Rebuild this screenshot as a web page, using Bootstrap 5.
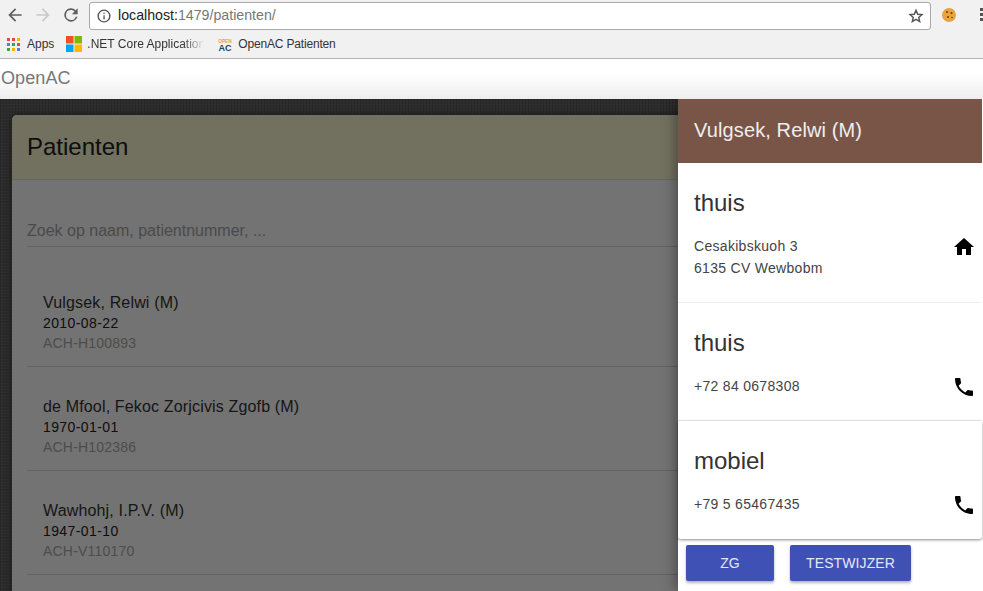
<!doctype html>
<html lang="nl"><head><meta charset="utf-8"><title>OpenAC</title>
<link href="https://cdn.jsdelivr.net/npm/bootstrap@5.3.0/dist/css/bootstrap.min.css" rel="stylesheet">
<style>
html,body{height:591px;overflow:hidden}
body{font-family:"Liberation Sans",Arial,sans-serif;background:#f1f1f1;position:relative;color:#212121}
.tool-row{height:30px;padding-left:5px}
.nav-glyph{width:20px;height:20px;flex:none}
.nav-glyph+.nav-glyph{margin-left:8px}
.url-box{width:843px;height:28px;margin-left:8px;background:#fff;border:1px solid #a9a9a9;border-radius:3px;font-size:14.2px;padding:0 6px 0 7px;margin-top:2px}
.url-box .host{color:#222}.url-box .rest{color:#777}
.mark-row{height:29px;font-size:12px;color:#333;border-bottom:1px solid #b5b5b5;padding-left:7px}
.bm{white-space:nowrap}
.app-bar{height:40px;background:linear-gradient(#fff 35%,#eee);padding-left:1px;font-size:18px;letter-spacing:.1px;color:#777;line-height:38px}
.stage{height:492px;background-color:#626262;background-image:repeating-linear-gradient(0deg,rgba(255,255,255,.05) 0 1px,transparent 1px 3px),repeating-linear-gradient(90deg,rgba(0,0,0,.14) 0 1px,transparent 1px 3px);position:relative;overflow:hidden;padding:16px 0 0 12px}
.pat-card{width:1000px;background:#fff;border-radius:5px 5px 0 0;height:500px;box-shadow:0 0 6px rgba(0,0,0,.5)}
.pat-head{height:65px;background:#fdf8d0;border-bottom:1px solid #ddd;border-radius:5px 5px 0 0;padding-left:15px;font-size:24px;line-height:63px;color:#212121}
.search-line{margin:31px 0 0 15px;height:36px;border-bottom:1px solid #d8d8d8;font-size:16px;color:#a5a5a5;line-height:39px}
.pat-list{margin-left:15px}
.pat-item{height:104px;border-bottom:1px solid #d8d8d8;padding:30px 0 0 16px;color:#222}
.pat-item:first-child{height:120px;padding-top:46px}
.pat-name{font-size:16px;line-height:20px;letter-spacing:.16px;color:#333}
.pat-date{font-size:14px;line-height:20px;letter-spacing:.4px}
.pat-id{font-size:14px;line-height:20px;letter-spacing:.2px;color:#aaa}
.dim{position:absolute;inset:0;background:rgba(0,0,0,.55)}
.drawer{position:absolute;top:0;bottom:0;right:0;width:305px;background:#fff;box-shadow:-3px 0 12px rgba(0,0,0,.35)}
.drawer-head{height:64px;width:304px;background:#795548;color:#eee;font-size:20px;letter-spacing:.12px;line-height:63px;padding-left:16px}
.info-block{width:304px;border-bottom:1px solid #eee;padding:0 0 0 16px;position:relative;color:#333}
.info-a{height:140px}.info-b{height:118px}
.info-c{height:118px;border-bottom:0;border-radius:0 0 3px 3px;box-shadow:0 1px 3px rgba(0,0,0,.45)}
.info-title{font-size:24px;line-height:28px;padding-top:26px;color:#333;height:54px}
.info-line{font-size:14px;line-height:22px;color:#444;letter-spacing:.3px}
.info-lines{padding-top:18px}
.info-icon{position:absolute;right:6px;top:72px;width:24px;height:24px}
.act-row{padding:6px 0 0 8px;gap:16px}
.act-btn{height:36px;background:#3f51b5;color:#e4e7f6;border:0;border-radius:2px;font-size:14px;letter-spacing:.1px;box-shadow:0 2px 3px rgba(0,0,0,.3);padding:0}
.act-a{width:88px}.act-b{width:121px}
.bm-icon{font-family:"Liberation Sans",sans-serif;font-weight:700}
</style></head><body>
<div class="tool-row d-flex align-items-center">
<svg class="nav-glyph" viewBox="0 0 24 24"><path fill="#5f5f5f" d="M20 11H7.8l5.6-5.6L12 4l-8 8 8 8 1.4-1.4L7.8 13H20z"/></svg>
<svg class="nav-glyph" viewBox="0 0 24 24"><path fill="#c9c9c9" d="M4 11h12.2l-5.6-5.600L12 4l8 8-8 8-1.400-1.400 5.600-5.600H4z"/></svg>
<svg class="nav-glyph" viewBox="0 0 24 24"><path fill="#5f5f5f" d="M17.65 6.35A8 8 0 1 0 19.73 14h-2.08A6 6 0 1 1 12 6c1.66 0 3.14.69 4.22 1.78L13 11h7V4z"/></svg>
<div class="url-box d-flex align-items-center">
<svg width="14" height="14" viewBox="0 0 24 24" style="margin-right:7px"><circle cx="12" cy="12" r="10" fill="none" stroke="#555" stroke-width="2.4"/><path fill="#555" d="M11 10.5h2.200V18H11zM11 6.500h2.200v2.200H11z"/></svg>
<span class="host">localhost:</span><span class="rest">1479/patienten/</span>
<svg class="ms-auto" width="16" height="16" viewBox="0 0 24 24"><path fill="none" stroke="#555" stroke-width="2.200" d="M12 3.500l2.600 5.800 6.300.6-4.800 4.200 1.400 6.200L12 17l-5.500 3.300 1.400-6.200-4.800-4.200 6.300-.6z"/></svg>
</div>
<svg width="16" height="16" viewBox="0 0 16 16" style="margin-left:10px"><circle cx="8" cy="8" r="7" fill="#e8a33d"/><circle cx="6" cy="5" r="1" fill="#6b3d12"/><circle cx="10.500" cy="6" r="1" fill="#6b3d12"/><circle cx="7" cy="10" r="1" fill="#6b3d12"/><circle cx="11" cy="10.500" r=".8" fill="#6b3d12"/></svg>
<svg width="3" height="14" viewBox="0 0 3 14" style="margin-left:23px;flex:none"><rect y="0" width="3" height="3" fill="#555"/><rect y="5" width="3" height="3" fill="#555"/><rect y="10" width="3" height="3" fill="#555"/></svg>
</div>
<div class="mark-row d-flex align-items-center">
<svg width="13" height="13" viewBox="0 0 13 13"><rect width="3" height="3" fill="#e04a3f"/><rect x="5" width="3" height="3" fill="#e04a3f"/><rect x="10" width="3" height="3" fill="#f4b400"/><rect y="5" width="3" height="3" fill="#4285f4"/><rect x="5" y="5" width="3" height="3" fill="#34a853"/><rect x="10" y="5" width="3" height="3" fill="#e04a3f"/><rect y="10" width="3" height="3" fill="#34a853"/><rect x="5" y="10" width="3" height="3" fill="#f4b400"/><rect x="10" y="10" width="3" height="3" fill="#4285f4"/></svg>
<span class="bm" style="margin-left:7px">Apps</span>
<svg width="16" height="16" viewBox="0 0 16 16" style="margin-left:12px"><rect width="7.500" height="7.500" fill="#f25022"/><rect x="8.500" width="7.500" height="7.500" fill="#7fba00"/><rect y="8.500" width="7.500" height="7.500" fill="#00a4ef"/><rect x="8.500" y="8.500" width="7.500" height="7.500" fill="#ffb900"/></svg>
<span class="bm" style="margin-left:5px;width:117px;overflow:hidden;-webkit-mask-image:linear-gradient(90deg,#000 82%,transparent)">.NET Core Application</span>
<svg class="bm-icon" width="14" height="14" viewBox="0 0 14 14" style="margin-left:14px"><text x="7" y="5.500" font-size="4.800" text-anchor="middle" fill="#e8a33d">OPEN</text><text x="7" y="13.500" font-size="9" text-anchor="middle" fill="#1f3f6e">AC</text></svg>
<span class="bm" style="margin-left:6px;letter-spacing:-.18px">OpenAC Patienten</span>
</div>
<div class="app-bar">OpenAC</div>
<div class="stage">
<div class="pat-card">
<div class="pat-head">Patienten</div>
<div class="search-line">Zoek op naam, patientnummer, ...</div>
<div class="pat-list">
<div class="pat-item"><div class="pat-name">Vulgsek, Relwi (M)</div><div class="pat-date">2010-08-22</div><div class="pat-id">ACH-H100893</div></div>
<div class="pat-item"><div class="pat-name">de Mfool, Fekoc Zorjcivis Zgofb (M)</div><div class="pat-date">1970-01-01</div><div class="pat-id">ACH-H102386</div></div>
<div class="pat-item"><div class="pat-name">Wawhohj, I.P.V. (M)</div><div class="pat-date">1947-01-10</div><div class="pat-id">ACH-V110170</div></div>
</div>
</div>
<div class="dim"></div>
<div class="drawer">
<div class="drawer-head">Vulgsek, Relwi (M)</div>
<div class="info-block info-a"><div class="info-title">thuis</div><div class="info-lines"><div class="info-line">Cesakibskuoh 3</div><div class="info-line">6135 CV Wewbobm</div></div>
<svg class="info-icon" viewBox="0 0 24 24"><path d="M10 20v-6h4v6h5v-8h3L12 3 2 12h3v8z"/></svg></div>
<div class="info-block info-b"><div class="info-title">thuis</div><div class="info-lines"><div class="info-line">+72 84 0678308</div></div>
<svg class="info-icon" viewBox="0 0 24 24"><path d="M6.62 10.79c1.44 2.83 3.76 5.14 6.59 6.59l2.2-2.2c.27-.27.67-.36 1.02-.24 1.12.37 2.33.57 3.57.57.55 0 1 .45 1 1V20c0 .55-.45 1-1 1-9.39 0-17-7.61-17-17 0-.55.45-1 1-1h3.5c.55 0 1 .45 1 1 0 1.25.2 2.45.57 3.57.11.35.03.74-.25 1.02z"/></svg></div>
<div class="info-block info-c"><div class="info-title">mobiel</div><div class="info-lines"><div class="info-line">+79 5 65467435</div></div>
<svg class="info-icon" viewBox="0 0 24 24"><path d="M6.62 10.79c1.44 2.83 3.76 5.14 6.59 6.59l2.2-2.2c.27-.27.67-.36 1.02-.24 1.12.37 2.33.57 3.57.57.55 0 1 .45 1 1V20c0 .55-.45 1-1 1-9.39 0-17-7.61-17-17 0-.55.45-1 1-1h3.5c.55 0 1 .45 1 1 0 1.25.2 2.45.57 3.57.11.35.03.74-.25 1.02z"/></svg></div>
<div class="act-row d-flex"><button class="btn act-btn act-a">ZG</button><button class="btn act-btn act-b">TESTWIJZER</button></div>
</div>
</div>
</body></html>
